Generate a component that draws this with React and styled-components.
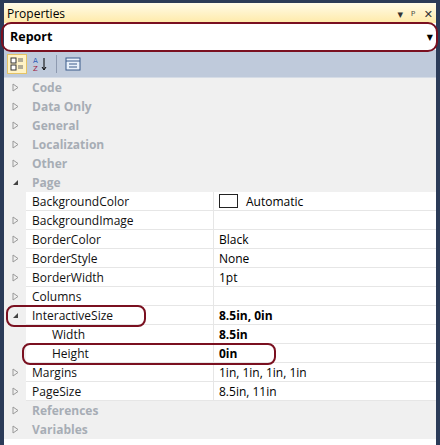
import React from "react";
import styled, { createGlobalStyle } from "styled-components";

const G = createGlobalStyle`
  body{margin:0;background:#2b3b58;font-family:"Segoe UI","Open Sans","DejaVu Sans",sans-serif;}
`;
const Frame = styled.div`
  width:440px;height:445px;box-sizing:border-box;padding:3px 4px 0 4px;background:#2b3b58;display:flex;flex-direction:column;
`;
const Title = styled.div`
  height:20px;display:flex;align-items:center;justify-content:space-between;padding:0 3px;
  background:linear-gradient(#fffbe8,#ffeaa8);font-size:12px;color:#000;
`;
const TitleIcons = styled.div`display:flex;gap:8px;font-size:11px;color:#333;`;
const Combo = styled.div`
  position:relative;height:27px;background:#fff;display:flex;align-items:center;padding-left:6px;
  font-weight:bold;font-size:12.5px;
`;
const Circle = styled.div`
  position:absolute;border:2.5px solid #7a1020;border-radius:${p=>p.r||6}px;pointer-events:none;
`;
const Toolbar = styled.div`
  height:27px;background:#bfcadb;display:flex;align-items:center;gap:3px;padding-left:3px;border-bottom:1px solid #d5dce6;
`;
const Btn = styled.div`
  width:20px;height:20px;display:flex;align-items:center;justify-content:center;
  background:${p=>p.active?"#fff3c6":"transparent"};border:${p=>p.active?"1px solid #e5c365":"1px solid transparent"};box-sizing:border-box;
`;
const Sep = styled.div`width:1px;height:18px;background:#8e9ab0;margin:0 3px;`;
const Grid = styled.div`flex:1;background:#fff;display:flex;flex-direction:column;position:relative;`;
const Row = styled.div`
  height:19px;display:grid;grid-template-columns:22px 188px 1fr;font-size:12px;align-items:stretch;
  background:${p=>p.cat?"#f0f0f0":"#fff"};
`;
const Margin = styled.div`background:#f0f0f0;display:flex;align-items:center;justify-content:center;color:#888;font-size:8px;`;
const Name = styled.div`
  display:flex;align-items:center;padding-left:${p=>p.indent?26:6}px;
  color:${p=>p.cat?"#a7adb5":"#111"};font-weight:${p=>p.cat?"bold":"normal"};
  border-bottom:1px solid ${p=>p.cat?"#f0f0f0":"#e6e6e6"};border-right:1px solid ${p=>p.cat?"#f0f0f0":"#e6e6e6"};
`;
const Value = styled.div`
  display:flex;align-items:center;gap:8px;padding-left:5px;font-weight:${p=>p.bold?"bold":"normal"};
  border-bottom:1px solid ${p=>p.cat?"#f0f0f0":"#e6e6e6"};
`;
const Swatch = styled.span`width:17px;height:12px;border:1px solid #222;background:#fff;display:inline-block;`;

const Tri = ({open}) => open
  ? <svg width="7" height="7"><path d="M6 1L6 6L1 6Z" fill="#444"/></svg>
  : <svg width="7" height="9"><path d="M1 1L6 4.5L1 8Z" fill="none" stroke="#999"/></svg>;

const rows = [
  {n:"Code",cat:1},{n:"Data Only",cat:1},{n:"General",cat:1},{n:"Localization",cat:1},{n:"Other",cat:1},
  {n:"Page",cat:1,open:1},
  {n:"BackgroundColor",v:"Automatic",sw:1,noArrow:1},
  {n:"BackgroundImage",v:""},{n:"BorderColor",v:"Black"},{n:"BorderStyle",v:"None"},{n:"BorderWidth",v:"1pt"},
  {n:"Columns",v:""},{n:"InteractiveSize",v:"8.5in, 0in",b:1,open:1},
  {n:"Width",v:"8.5in",b:1,ind:1},{n:"Height",v:"0in",b:1,ind:1},
  {n:"Margins",v:"1in, 1in, 1in, 1in"},{n:"PageSize",v:"8.5in, 11in"},
  {n:"References",cat:1},{n:"Variables",cat:1},
];

export default function App(){
  return <Frame><G/>
    <Title><span>Properties</span><TitleIcons><span>▾</span><span>ᵖ</span><span>✕</span></TitleIcons></Title>
    <Combo>Report<span style={{position:"absolute",right:3,fontSize:8}}>▼</span>
      <Circle style={{left:-3,top:-1,right:-2,bottom:-2}} r={10}/></Combo>
    <Toolbar>
      <Btn active><svg width="14" height="14"><rect x="1" y="1" width="5" height="5" fill="#fff" stroke="#333"/><rect x="1" y="8" width="5" height="5" fill="#fff" stroke="#333"/><path d="M8 2h5M8 4h5M8 9h5M8 11h5" stroke="#666"/></svg></Btn>
      <Btn><svg width="16" height="16"><text x="1" y="7" fontSize="7" fill="#2b5bb8" fontFamily="DejaVu Sans">A</text><text x="1" y="15" fontSize="7" fill="#a02040" fontFamily="DejaVu Sans">Z</text><path d="M12 2v11M10 11l2 3l2-3" stroke="#000" fill="none"/></svg></Btn>
      <Sep/>
      <Btn><svg width="16" height="14"><rect x="1" y="1" width="14" height="12" fill="#e8f0fa" stroke="#3a5a8a"/><path d="M1 4h14M4 7h8M4 10h8" stroke="#3a5a8a"/></svg></Btn>
    </Toolbar>
    <Grid>
      {rows.map(r=>(
        <Row key={r.n} cat={r.cat}>
          <Margin>{!r.noArrow && !r.ind && <Tri open={r.open}/>}</Margin>
          <Name cat={r.cat} indent={r.ind}>{r.n}</Name>
          <Value cat={r.cat} bold={r.b}>{r.sw && <Swatch/>}{r.v}</Value>
        </Row>
      ))}
      <Circle style={{left:2,top:227,width:136,height:18}} r={8}/>
      <Circle style={{left:18,top:265,width:250,height:18}} r={8}/>
    </Grid>
  </Frame>;
}
